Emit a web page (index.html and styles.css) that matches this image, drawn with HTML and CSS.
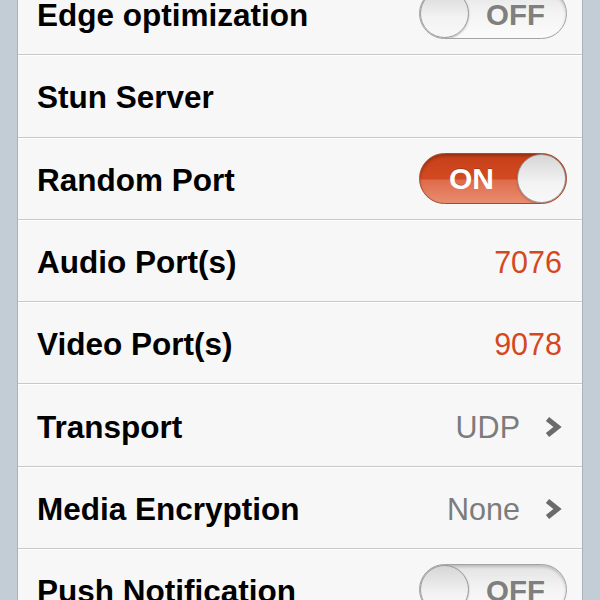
FILE: index.html
```
<!DOCTYPE html>
<html>
<head>
<meta charset="utf-8">
<link rel="stylesheet" href="styles.css">
</head>
<body>
<div class="card">
  <div class="row">
    <span class="label">Edge optimization</span>
    <div class="switch off"><span class="knob"></span><span class="stext">OFF</span></div>
  </div>
  <div class="row">
    <span class="label">Stun Server</span>
  </div>
  <div class="row">
    <span class="label">Random Port</span>
    <div class="switch on"><span class="stext">ON</span><span class="knob"></span></div>
  </div>
  <div class="row">
    <span class="label">Audio Port(s)</span>
    <span class="value accent">7076</span>
  </div>
  <div class="row">
    <span class="label">Video Port(s)</span>
    <span class="value accent">9078</span>
  </div>
  <div class="row">
    <span class="label">Transport</span>
    <span class="value muted">UDP</span>
    <svg class="chev" viewBox="0 0 18 22"><path d="M3.5 3 L13.5 11 L3.5 19" fill="none" stroke="#6b6b6b" stroke-width="5.2" stroke-linecap="butt" stroke-linejoin="miter"/></svg>
  </div>
  <div class="row">
    <span class="label">Media Encryption</span>
    <span class="value muted">None</span>
    <svg class="chev" viewBox="0 0 18 22"><path d="M3.5 3 L13.5 11 L3.5 19" fill="none" stroke="#6b6b6b" stroke-width="5.2" stroke-linecap="butt" stroke-linejoin="miter"/></svg>
  </div>
  <div class="row">
    <span class="label">Push Notification</span>
    <div class="switch off"><span class="knob"></span><span class="stext">OFF</span></div>
  </div>
</div>
</body>
</html>
```
FILE: styles.css
```
html, body {
  margin: 0;
  padding: 0;
  height: 600px;
  overflow: hidden;
}
body {
  background: #c3cdd5;
  font-family: "Liberation Sans", Arial, sans-serif;
}
.card {
  margin: -27px 17px 0 17px;
  background: #f7f7f7;
  border-left: 1px solid #a9b3bb;
  border-right: 1px solid #a9b3bb;
}
.row {
  height: 81.3px;
  display: flex;
  align-items: center;
  padding: 0 20px 0 19px;
  border-bottom: 1px solid #c9c9c9;
  box-shadow: 0 1px 0 #ffffff;
  position: relative;
}
.label {
  flex: 1;
  font-size: 31.5px;
  font-weight: bold;
  color: #000;
  position: relative;
  top: 2px;
}
.value {
  font-size: 30.5px;
  position: relative;
  top: 2px;
}
.accent {
  color: #d4481f;
}
.muted {
  color: #7c7c7c;
}
.chev {
  display: block;
  width: 18px;
  height: 22px;
  flex: 0 0 18px;
  margin-left: 24px;
  margin-right: 0;
  position: relative;
  top: 2px;
}
.switch {
  width: 146px;
  height: 49px;
  border-radius: 26px;
  border: 1px solid #a3a3a3;
  display: flex;
  align-items: center;
  margin-right: -5px;
  overflow: hidden;
  box-sizing: content-box;
  flex: none;
}
.switch .knob {
  width: 47px;
  height: 47px;
  border-radius: 50%;
  border: 1px solid #959595;
  background: linear-gradient(#d6d6d6, #f3f3f3 60%, #f8f8f8);
  box-shadow: 0 1px 2px rgba(0,0,0,0.25);
  flex: none;
}
.switch .stext {
  flex: 1;
  text-align: center;
  font-weight: bold;
  font-size: 29.5px;
  position: relative;
  top: 1px;
}
.switch.off {
  background: linear-gradient(#e3e3e3, #f4f4f4 50%, #fbfbfb);
  box-shadow: inset 0 2px 3px rgba(0,0,0,0.18);
}
.switch.off .stext {
  color: #7f7f7f;
  padding-right: 4px;
}
.switch.on {
  background: linear-gradient(#c53f18 0%, #d34a22 50%, #df6c4a 54%, #e88d70 100%);
  border-color: #a8492c;
  box-shadow: inset 0 2px 3px rgba(0,0,0,0.25);
}
.switch.on .stext {
  color: #ffffff;
  font-size: 30px;
  text-shadow: 0 -1px 0 rgba(0,0,0,0.2);
  padding-left: 6px;
}
```
